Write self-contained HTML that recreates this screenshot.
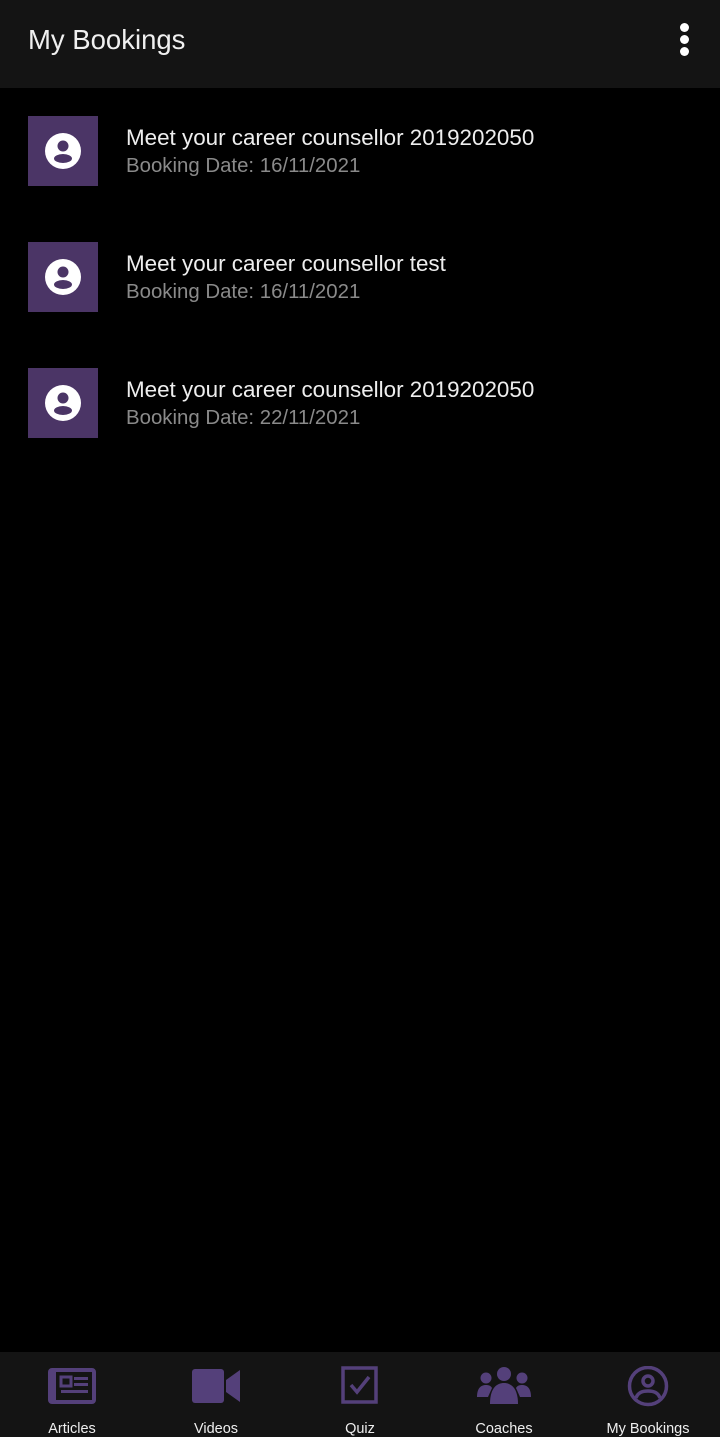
<!DOCTYPE html>
<html><head><meta charset="utf-8"><style>
body{margin:0;width:720px;height:1437px;background:#000;font-family:"Liberation Sans",sans-serif;position:relative;overflow:hidden}
.hdr{position:absolute;left:0;top:0;width:720px;height:88px;background:#141414}
.hdr .t{position:absolute;left:28px;top:24px;font-size:27.5px;color:#f0f0f0}
.dots{position:absolute;left:680px;top:23px}
.dots i{display:block;width:9px;height:9px;border-radius:50%;background:#fff;margin-bottom:3px}
.item{position:absolute;left:28px;width:692px;height:70px}
.av{position:absolute;left:0;top:0;width:70px;height:70px;background:#4b3566}
.av svg{position:absolute;left:17px;top:17px}
.l1{position:absolute;left:98px;top:9px;font-size:22.4px;color:#eee;white-space:nowrap}
.l2{position:absolute;left:98px;top:39px;font-size:20.4px;color:#8a8a8a;white-space:nowrap}
.nav{position:absolute;left:0;top:1352px;width:720px;height:85px;background:#141414}
.n{position:absolute;top:0;width:144px;text-align:center}
.n svg{position:absolute;top:14px;left:50%;margin-left:-24px}
.n span{position:absolute;top:69px;left:0;width:144px;font-size:14.5px;color:#eee}
</style></head><body>
<div class="hdr"><div class="t">My Bookings</div><div class="dots"><i></i><i></i><i></i></div></div>

<div class="item" style="top:116px"><div class="av"><svg width="36" height="36" viewBox="0 0 36 36"><circle cx="18" cy="18" r="18" fill="#fff"/><circle cx="18" cy="13" r="5.5" fill="#4b3566"/><ellipse cx="18" cy="25.5" rx="9" ry="4.5" fill="#4b3566"/></svg></div><div class="l1">Meet your career counsellor 2019202050</div><div class="l2">Booking Date: 16/11/2021</div></div>
<div class="item" style="top:242px"><div class="av"><svg width="36" height="36" viewBox="0 0 36 36"><circle cx="18" cy="18" r="18" fill="#fff"/><circle cx="18" cy="13" r="5.5" fill="#4b3566"/><ellipse cx="18" cy="25.5" rx="9" ry="4.5" fill="#4b3566"/></svg></div><div class="l1">Meet your career counsellor test</div><div class="l2">Booking Date: 16/11/2021</div></div>
<div class="item" style="top:368px"><div class="av"><svg width="36" height="36" viewBox="0 0 36 36"><circle cx="18" cy="18" r="18" fill="#fff"/><circle cx="18" cy="13" r="5.5" fill="#4b3566"/><ellipse cx="18" cy="25.5" rx="9" ry="4.5" fill="#4b3566"/></svg></div><div class="l1">Meet your career counsellor 2019202050</div><div class="l2">Booking Date: 22/11/2021</div></div>

<div class="nav">
<div class="n" style="left:0"><svg width="48" height="40" viewBox="0 0 48 40"><rect x="2" y="4" width="44" height="32" rx="2" fill="none" stroke="#54407a" stroke-width="4"/><rect x="2" y="4" width="6" height="32" fill="#54407a"/><rect x="13" y="11" width="10" height="9" fill="none" stroke="#54407a" stroke-width="3"/><rect x="26" y="11" width="14" height="3" fill="#54407a"/><rect x="26" y="17" width="14" height="3" fill="#54407a"/><rect x="13" y="24" width="27" height="3" fill="#54407a"/></svg><span>Articles</span></div>
<div class="n" style="left:144px"><svg width="48" height="40" viewBox="0 0 48 40"><rect x="0" y="3" width="32" height="34" rx="3" fill="#54407a"/><path d="M34 14L48 4V36L34 26Z" fill="#54407a"/></svg><span>Videos</span></div>
<div class="n" style="left:288px"><svg width="48" height="40" viewBox="0 0 48 40"><rect x="7" y="2" width="33" height="34" fill="none" stroke="#54407a" stroke-width="3.5"/><path d="M15 19L21 26L33 11" fill="none" stroke="#54407a" stroke-width="3.5"/></svg><span>Quiz</span></div>
<div class="n" style="left:432px"><svg width="56" height="40" viewBox="0 0 56 40" style="margin-left:-28px"><circle cx="28" cy="8" r="7" fill="#54407a"/><circle cx="10" cy="12" r="5.5" fill="#54407a"/><circle cx="46" cy="12" r="5.5" fill="#54407a"/><path d="M14 38C14 23 20 17 28 17C36 17 42 23 42 38Z" fill="#54407a"/><path d="M1 31C1 22 5 19 10 19C13 19 15 20 16 22L12 31Z" fill="#54407a"/><path d="M55 31C55 22 51 19 46 19C43 19 41 20 40 22L44 31Z" fill="#54407a"/></svg><span>Coaches</span></div>
<div class="n" style="left:576px"><svg width="48" height="42" viewBox="0 0 48 42"><circle cx="24" cy="20" r="18.5" fill="none" stroke="#54407a" stroke-width="3.5"/><circle cx="24" cy="15" r="5" fill="none" stroke="#54407a" stroke-width="3.5"/><path d="M12 32C14 26 19 25 24 25C29 25 34 26 36 32" fill="none" stroke="#54407a" stroke-width="3.5"/></svg><span>My Bookings</span></div>
</div>
</body></html>
